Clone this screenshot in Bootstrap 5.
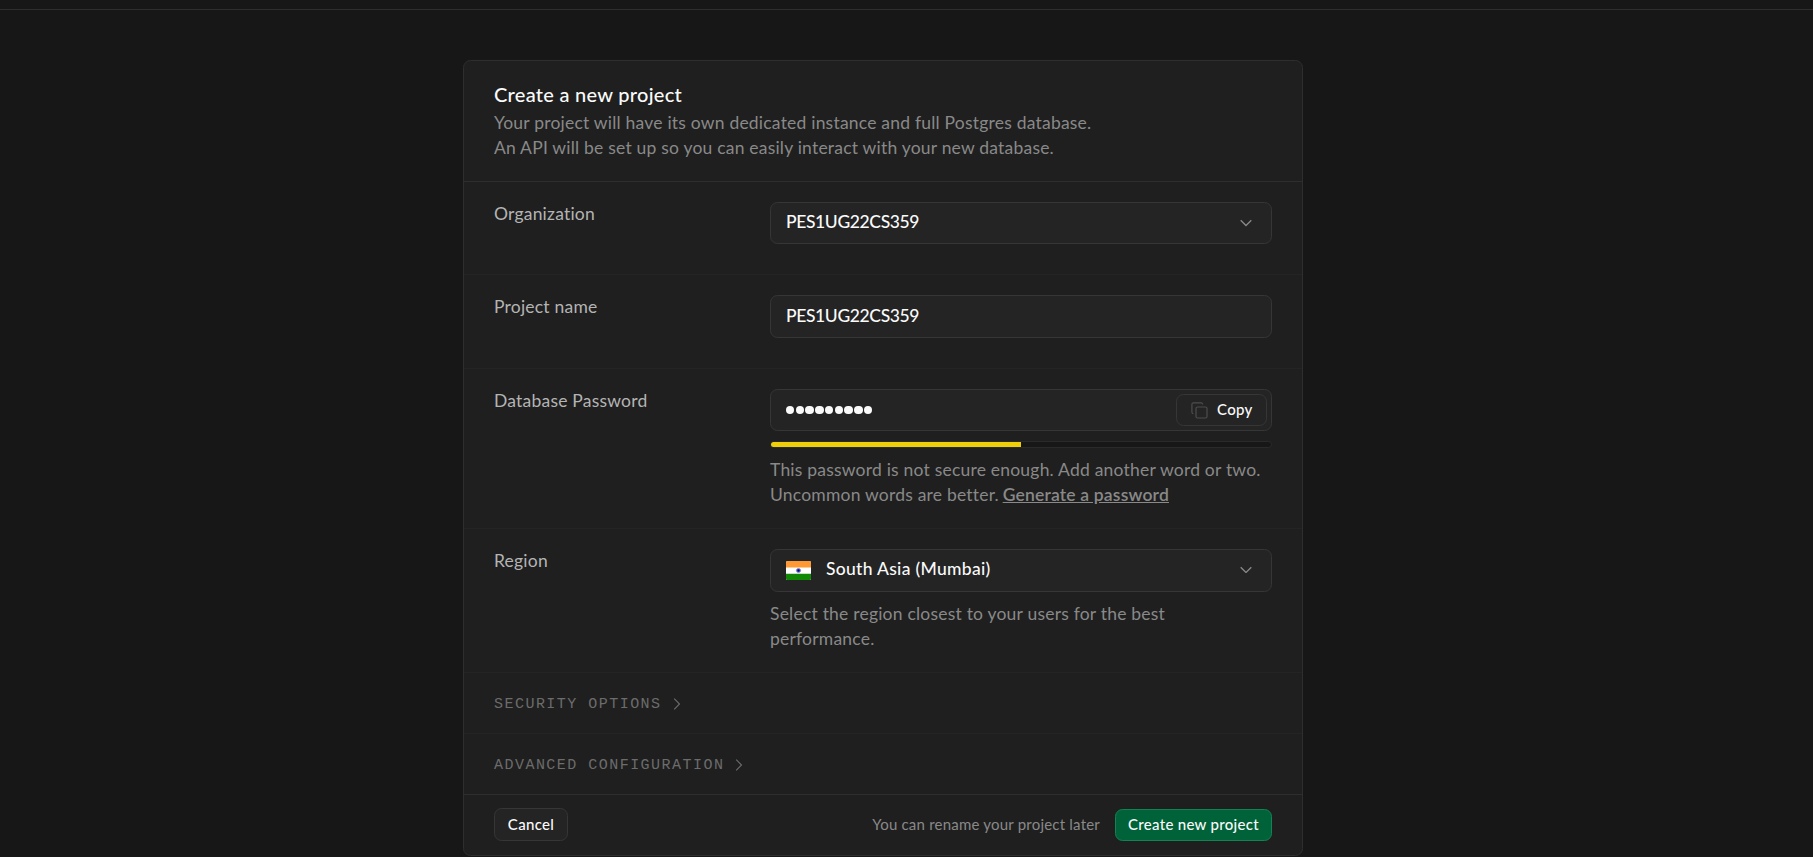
<!DOCTYPE html>
<html lang="en" data-bs-theme="dark">
<head>
<meta charset="utf-8">
<meta name="viewport" content="width=device-width, initial-scale=1">
<title>Create a new project</title>
<link href="https://cdn.jsdelivr.net/npm/bootstrap@5.3.0/dist/css/bootstrap.min.css" rel="stylesheet">
<style>
  body { background: #171717; font-family: Lato, "Open Sans", sans-serif; font-size: 17.5px; line-height: 25px; letter-spacing: .21px; color: #b4b4b4; height: 857px; overflow: hidden; }
  .topbar { height: 10px; border-bottom: 1px solid #2e2e2e; }
  .panel { width: 840px; height: 796px; margin: 50px 0 0 463px; background: #1f1f1f; border: 1px solid #2e2e2e; border-radius: 7.5px; }
  .panel-head { height: 121px; padding: 20px 30px 0; border-bottom: 1px solid #2e2e2e; color: #898989; }
  .panel-head h1 { font-size: 20px; line-height: 27px; padding-bottom: 2px; font-weight: 500; color: #fafafa; letter-spacing: .28px; }
  .form-line { padding: 20px 30px 0; border-bottom: 1px solid #242424; }
  .form-line > label { width: 276px; flex: none; margin-top: -1px; }
  .h-org { height: 93px; } .h-name { height: 94px; } .h-pass { height: 160px; } .h-region { height: 144px; }
  .field { height: 43px; padding: 0 15px; background: #242424; border: 1px solid #363636; border-radius: 7.5px; color: #fafafa; font-weight: 500; }
  .field.short { height: 42px; }
  .code { letter-spacing: -.37px; padding-bottom: 2px; }
  .short .code { padding-bottom: 3px; }
  .help { color: #898989; white-space: nowrap; }
  .dots { gap: 1.35px; }
  .dots i { width: 8.4px; height: 8.4px; border-radius: 50%; background: #fafafa; }
  .small-btn { font-size: 15px; line-height: 20px; font-weight: 500; letter-spacing: .3px; border: 1px solid #363636; background: #242424; color: #fafafa; border-radius: 7.5px; padding: 0 0 2px; }
  .copy-btn { width: 91px; height: 32px; padding: 0 0 0 14px; gap: 9px; }
  .copy-btn span { padding-bottom: 3px; }
  .meter { height: 7px; margin-top: 10px; background: #171717; border: 1px solid #2a2a2a; border-radius: 4px; overflow: hidden; }
  .meter-fill { height: 5px; background: #efcf0a; }
  .hint { margin-top: 9px; }
  .gen { font-weight: 600; letter-spacing: .18px; margin-left: -1px; }
  .region-name { margin-left: 15px; letter-spacing: .3px; padding-bottom: 4px; }
  .fold { height: 61px; padding: 2px 30px 0; border-bottom: 1px solid #242424; color: #6c6c6c; font: 15px "Liberation Mono", monospace; letter-spacing: 1.47px; }
  .fold svg { margin: 0 0 1px 11px; }
  .fold.last { border-bottom-color: #2e2e2e; }
  .panel-foot { height: 60px; padding: 0 30px; }
  .cancel-btn { width: 74px; height: 33px; margin-bottom: 1px; }
  .create-btn { width: 157px; height: 32px; background: #006239; border-color: #128353; }
  .foot-note { font-size: 15px; margin-right: 15px; padding-bottom: 2px; }
  svg { flex: none; display: block; }
</style>
</head>
<body>
<header class="topbar"></header>
<main class="panel">
  <div class="panel-head">
    <h1 class="m-0">Create a new project</h1>
    <p class="m-0">Your project will have its own dedicated instance and full Postgres database.<br>An API will be set up so you can easily interact with your new database.</p>
  </div>

  <div class="form-line h-org d-flex align-items-start">
    <label>Organization</label>
    <div class="field short flex-grow-1 d-flex align-items-center justify-content-between">
      <span class="code">PES1UG22CS359</span>
      <svg class="me-1" width="12" height="8" viewBox="0 0 12 8" fill="none" stroke="#898989" stroke-width="1.3"><path d="M.7 1.2 6 6.5l5.3-5.3"/></svg>
    </div>
  </div>

  <div class="form-line h-name d-flex align-items-start">
    <label>Project name</label>
    <div class="field flex-grow-1 d-flex align-items-center"><span class="code">PES1UG22CS359</span></div>
  </div>

  <div class="form-line h-pass d-flex align-items-start">
    <label>Database Password</label>
    <div class="flex-grow-1">
      <div class="field short d-flex align-items-center justify-content-between pe-1">
        <div class="dots d-flex"><i></i><i></i><i></i><i></i><i></i><i></i><i></i><i></i><i></i></div>
        <button class="small-btn copy-btn d-flex align-items-center">
          <svg width="17" height="17" viewBox="0 0 17 17" fill="none" stroke="#4d4d4d" stroke-width="1.2"><rect x="5" y="5" width="11" height="11" rx="1.5"/><path d="M2.4 11.6Q.9 11.6.9 10V2.4Q.9.9 2.4.9H10Q11.6.9 11.6 2.4"/></svg>
          <span>Copy</span>
        </button>
      </div>
      <div class="meter"><div class="meter-fill" style="width:250px"></div></div>
      <div class="help hint">This password is not secure enough. Add another word or two.<br>Uncommon words are better. <span class="gen text-decoration-underline">Generate a password</span></div>
    </div>
  </div>

  <div class="form-line h-region d-flex align-items-start">
    <label>Region</label>
    <div class="flex-grow-1">
      <div class="field d-flex align-items-center">
        <svg width="25" height="19" viewBox="0 0 25 19"><clipPath id="f"><rect width="25" height="19" rx="1.5"/></clipPath><g clip-path="url(#f)"><path fill="#fff" d="M0 0h25v19H0z"/><path fill="#f93" d="M0 0h25v6.4H0z"/><path fill="#128807" d="M0 12.7h25V19H0z"/></g><circle cx="12.5" cy="9.5" r="2.1" fill="#3d3da8" stroke="#8888cc" stroke-width=".8"/><circle cx="12.5" cy="9.5" r=".9" fill="#000080"/></svg>
        <span class="region-name flex-grow-1">South Asia (Mumbai)</span>
        <svg class="me-1 mb-1" width="12" height="8" viewBox="0 0 12 8" fill="none" stroke="#898989" stroke-width="1.3"><path d="M.7 2.2 6 7.5l5.3-5.3"/></svg>
      </div>
      <div class="help hint">Select the region closest to your users for the best<br>performance.</div>
    </div>
  </div>

  <div class="fold d-flex align-items-center"><span>SECURITY OPTIONS</span>
    <svg width="8" height="12" viewBox="0 0 8 12" fill="none" stroke="#6c6c6c" stroke-width="1.1"><path d="M1.2.7 6.5 6l-5.3 5.3"/></svg></div>
  <div class="fold last d-flex align-items-center"><span>ADVANCED CONFIGURATION</span>
    <svg width="8" height="12" viewBox="0 0 8 12" fill="none" stroke="#6c6c6c" stroke-width="1.1"><path d="M1.2.7 6.5 6l-5.3 5.3"/></svg></div>

  <div class="panel-foot d-flex align-items-center">
    <button class="small-btn cancel-btn me-auto">Cancel</button>
    <span class="help foot-note">You can rename your project later</span>
    <button class="small-btn create-btn">Create new project</button>
  </div>
</main>
<script src="https://cdn.jsdelivr.net/npm/bootstrap@5.3.0/dist/js/bootstrap.bundle.min.js"></script>
</body>
</html>
